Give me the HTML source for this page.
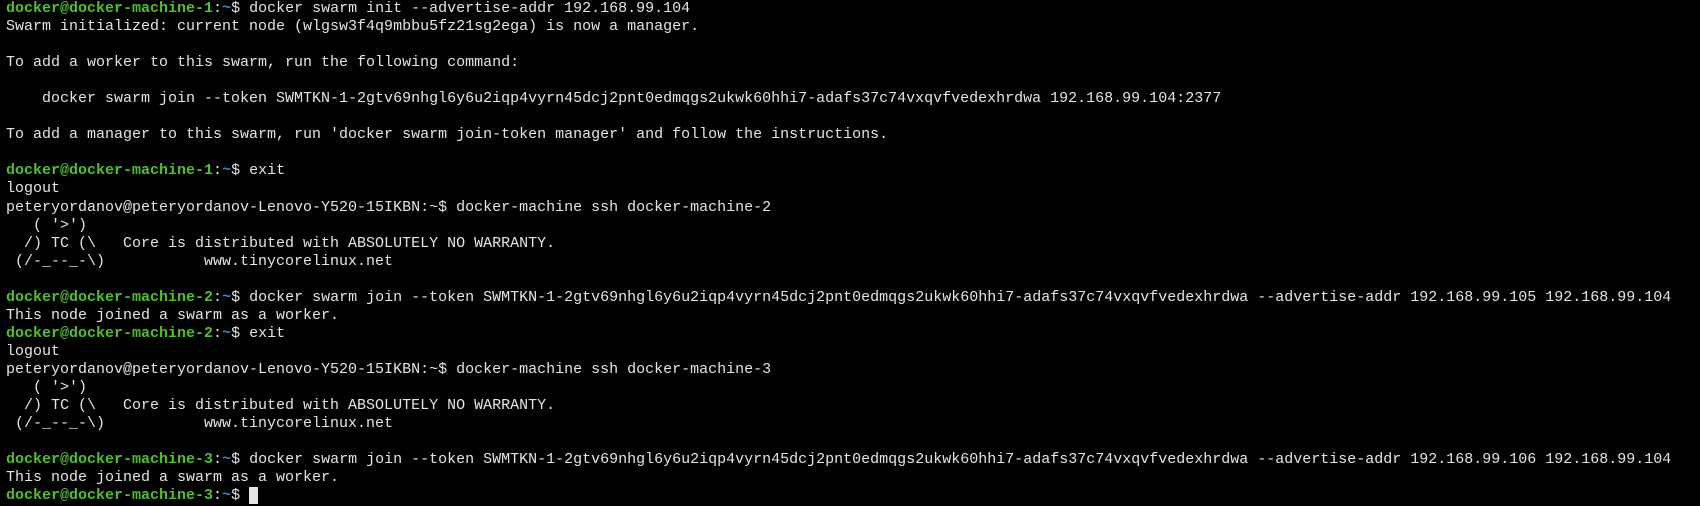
<!DOCTYPE html>
<html><head><meta charset="utf-8"><style>
html,body{margin:0;padding:0;background:#000;width:1700px;height:506px;overflow:hidden}
pre{margin:0;position:absolute;left:6px;top:0;font-family:"Liberation Mono",monospace;font-size:15px;line-height:18.04px;color:#e4e4e4;white-space:pre}
.g{color:#4fc02a;font-weight:bold}
.b{color:#4a7fd0;font-weight:bold}
.cur{background:#e4e4e4}
</style></head><body><pre><span class="g">docker@docker-machine-1</span>:<span class="b">~</span>$ docker swarm init --advertise-addr 192.168.99.104
Swarm initialized: current node (wlgsw3f4q9mbbu5fz21sg2ega) is now a manager.

To add a worker to this swarm, run the following command:

    docker swarm join --token SWMTKN-1-2gtv69nhgl6y6u2iqp4vyrn45dcj2pnt0edmqgs2ukwk60hhi7-adafs37c74vxqvfvedexhrdwa 192.168.99.104:2377

To add a manager to this swarm, run 'docker swarm join-token manager' and follow the instructions.

<span class="g">docker@docker-machine-1</span>:<span class="b">~</span>$ exit
logout
peteryordanov@peteryordanov-Lenovo-Y520-15IKBN:~$ docker-machine ssh docker-machine-2
   ( '>')
  /) TC (\   Core is distributed with ABSOLUTELY NO WARRANTY.
 (/-_--_-\)           www.tinycorelinux.net

<span class="g">docker@docker-machine-2</span>:<span class="b">~</span>$ docker swarm join --token SWMTKN-1-2gtv69nhgl6y6u2iqp4vyrn45dcj2pnt0edmqgs2ukwk60hhi7-adafs37c74vxqvfvedexhrdwa --advertise-addr 192.168.99.105 192.168.99.104
This node joined a swarm as a worker.
<span class="g">docker@docker-machine-2</span>:<span class="b">~</span>$ exit
logout
peteryordanov@peteryordanov-Lenovo-Y520-15IKBN:~$ docker-machine ssh docker-machine-3
   ( '>')
  /) TC (\   Core is distributed with ABSOLUTELY NO WARRANTY.
 (/-_--_-\)           www.tinycorelinux.net

<span class="g">docker@docker-machine-3</span>:<span class="b">~</span>$ docker swarm join --token SWMTKN-1-2gtv69nhgl6y6u2iqp4vyrn45dcj2pnt0edmqgs2ukwk60hhi7-adafs37c74vxqvfvedexhrdwa --advertise-addr 192.168.99.106 192.168.99.104
This node joined a swarm as a worker.
<span class="g">docker@docker-machine-3</span>:<span class="b">~</span>$ <span class="cur"> </span></pre></body></html>
